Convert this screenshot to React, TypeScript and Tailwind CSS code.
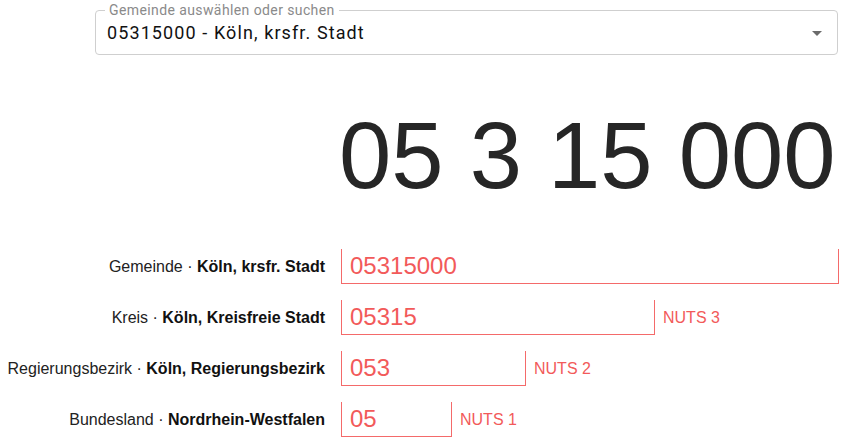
import React from 'react';

interface LevelRow {
    id: string;
    level: string;
    name: string;
    code: string;
    boxWidth: string;
    nuts?: string;
}

const rows: LevelRow[] = [
    { id: 'gem', level: 'Gemeinde', name: 'Köln, krsfr. Stadt', code: '05315000', boxWidth: 'w-[498px]' },
    { id: 'krs', level: 'Kreis', name: 'Köln, Kreisfreie Stadt', code: '05315', boxWidth: 'w-[314px]', nuts: 'NUTS 3' },
    { id: 'rb', level: 'Regierungsbezirk', name: 'Köln, Regierungsbezirk', code: '053', boxWidth: 'w-[185px]', nuts: 'NUTS 2' },
    { id: 'bl', level: 'Bundesland', name: 'Nordrhein-Westfalen', code: '05', boxWidth: 'w-[111px]', nuts: 'NUTS 1' }
];

const ArrowDropDown: React.FC = () => (
    <svg width="24" height="24" viewBox="0 0 24 24" className="fill-[#6b6b6b]">
        <path d="M7 10l5 5 5-5z" />
    </svg>
);

const App: React.FC = () => {
    return (
        <div className="w-[850px] h-[444px] bg-white pt-[10px] pr-[12px] font-['Liberation_Sans',Arial,sans-serif] overflow-hidden">
            {/* municipality picker */}
            <div className="ml-[95px] relative h-[45px] border border-[#cfcfcf] rounded-[4px] flex items-center pl-[11px] pr-[8px] font-['Roboto',sans-serif]">
                <span className="absolute left-[9px] -top-[10px] px-[4px] bg-white text-[14px] tracking-[0.4px] text-[#8a8a8a] leading-[18px]">
                    Gemeinde auswählen oder suchen
                </span>
                <span className="flex-1 text-[18px] tracking-[1.1px] text-[#111] leading-none pt-[1px]">
                    05315000 - Köln, krsfr. Stadt
                </span>
                <ArrowDropDown />
            </div>

            <div className="grid grid-cols-[325px_1fr] gap-x-4">
                <div />
                <div className="-ml-[2px] mt-[54px] text-[94px] leading-none text-[#262626] whitespace-nowrap">
                    05 3 15 000
                </div>
            </div>

            <div className="mt-[46px] flex flex-col gap-[16px]">
                {rows.map(row => (
                    <div key={row.id} className="grid grid-cols-[325px_1fr] gap-x-4 items-center">
                        <div className="text-right text-[16px] text-[#222] whitespace-nowrap">
                            {row.level} · <span className="font-bold text-[#111]">{row.name}</span>
                        </div>
                        <div className="flex items-center">
                            <div className={`${row.boxWidth} h-[35px] border-l border-r border-b border-[#f46a6a] flex items-center pl-2 text-[24px] text-[#f25a5a] leading-none`}>
                                {row.code}
                            </div>
                            {row.nuts && (
                                <span className="ml-[8px] text-[16px] text-[#f25a5a]">{row.nuts}</span>
                            )}
                        </div>
                    </div>
                ))}
            </div>
        </div>
    );
};

export default App;
